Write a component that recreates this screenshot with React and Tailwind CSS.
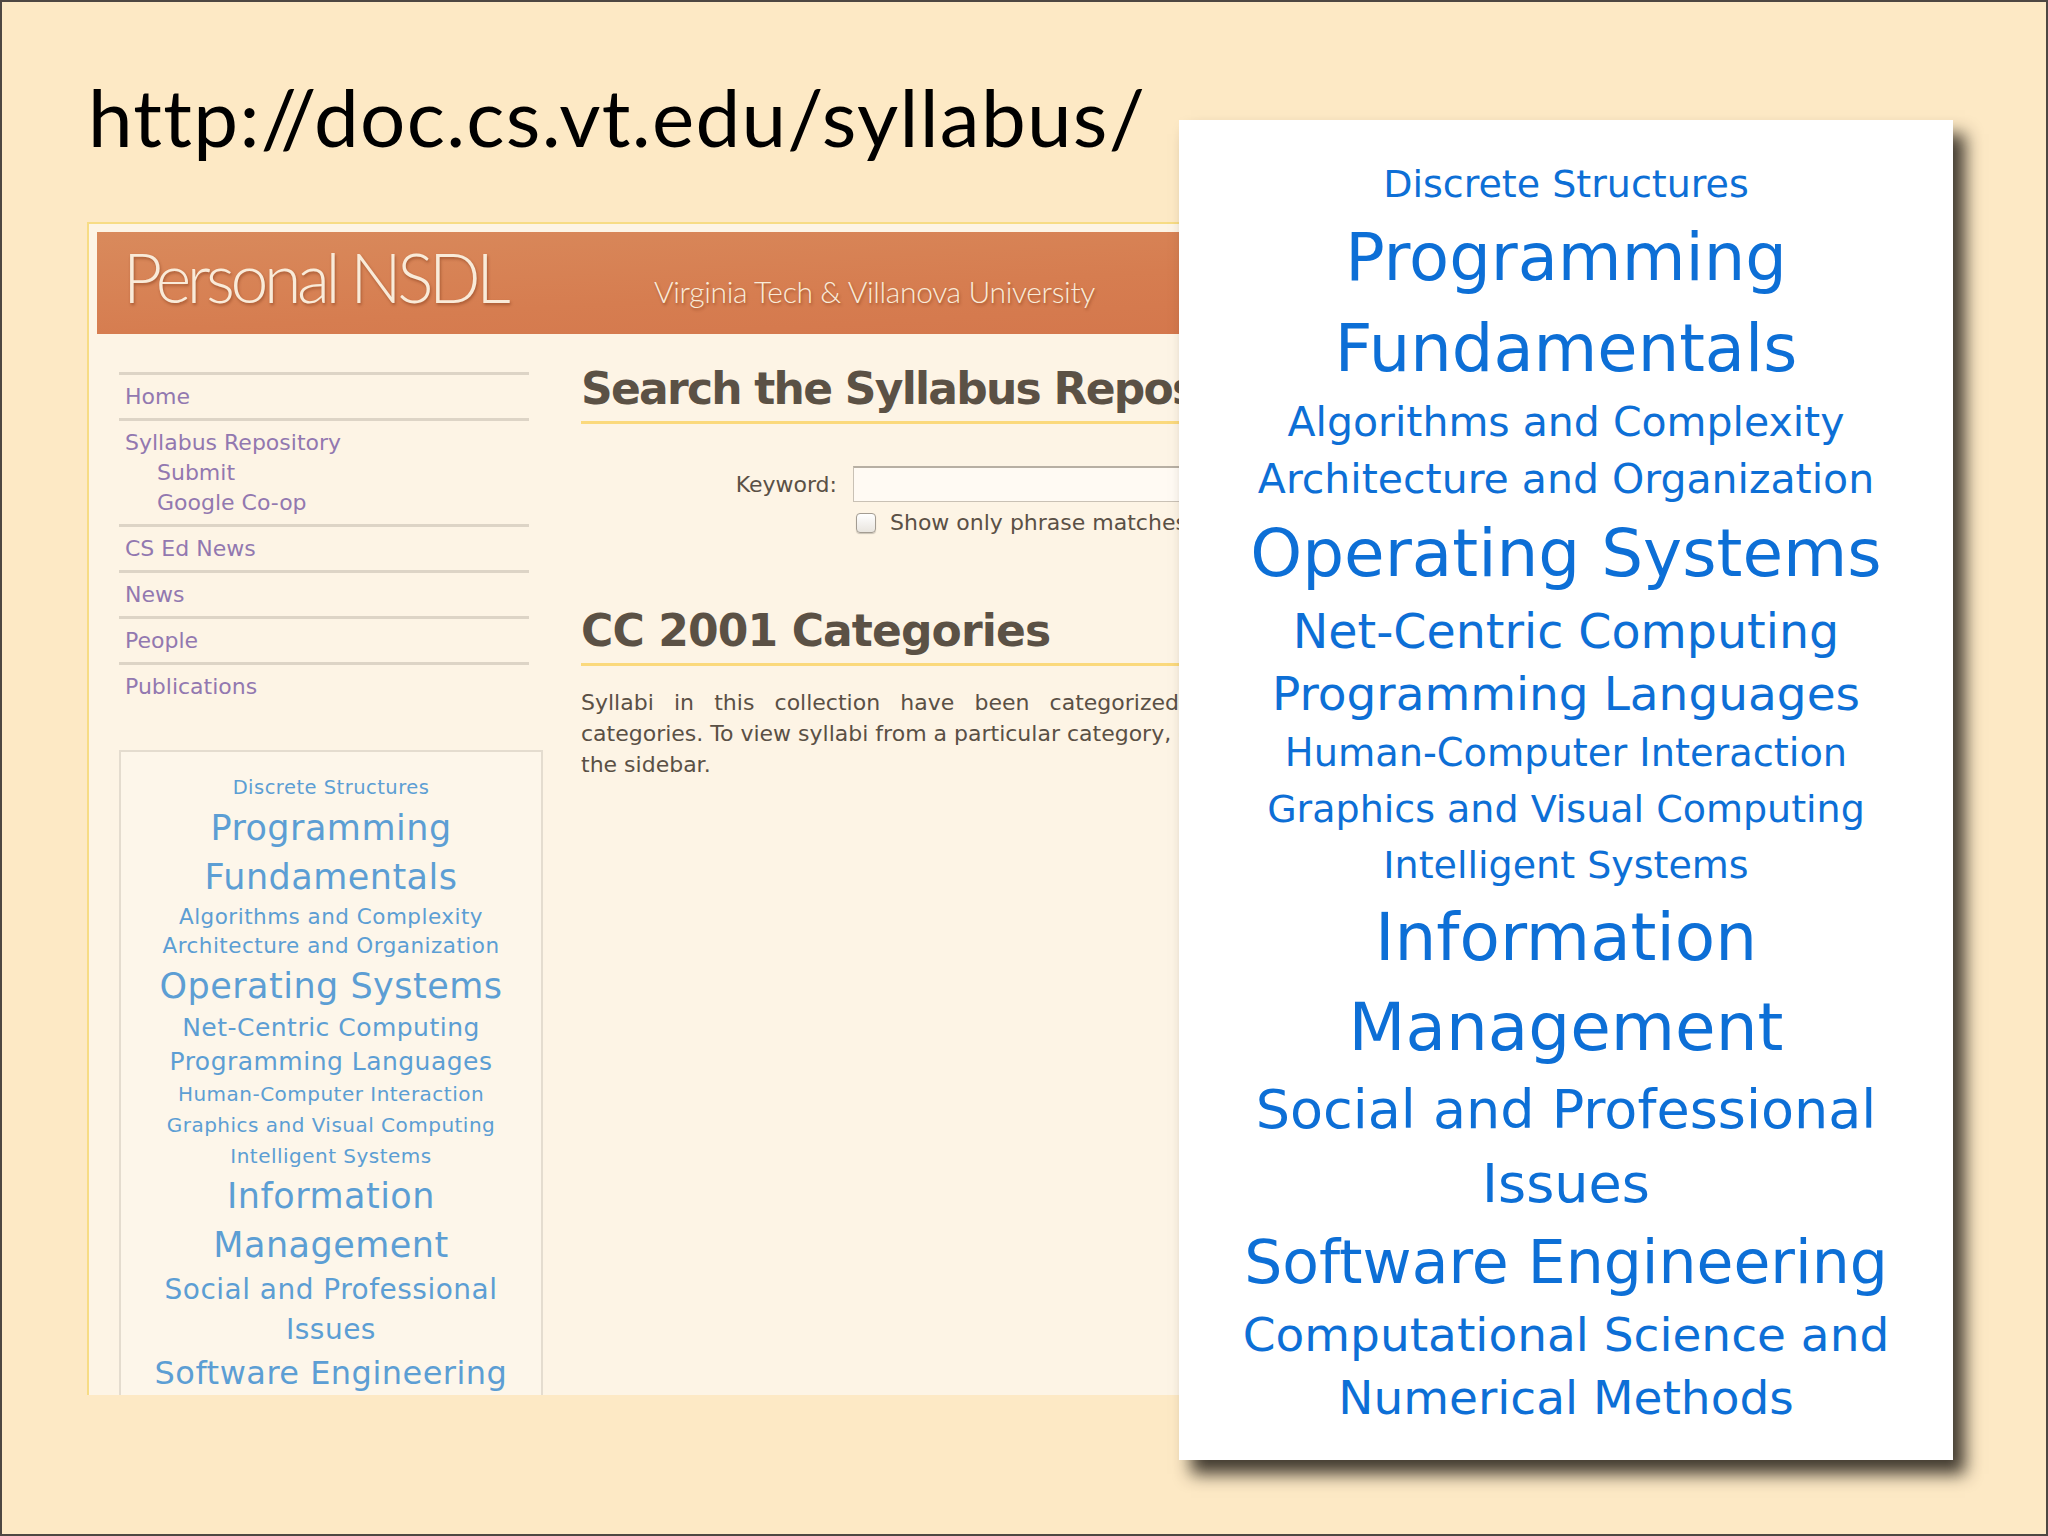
import React from 'react';

const navItems = [
  { label: 'Home' },
  { label: 'Syllabus Repository', children: ['Submit', 'Google Co-op'] },
  { label: 'CS Ed News' },
  { label: 'News' },
  { label: 'People' },
  { label: 'Publications' },
];

// tag cloud: same entries, sized for the small sidebar and for the enlarged panel
const categories = [
  { label: 'Discrete Structures', small: 'text-[19.5px] leading-[32px]', big: 'text-[38px] leading-[56px]' },
  { label: 'Programming Fundamentals', small: 'text-[35px] leading-[49px]', big: 'text-[65.5px] leading-[91px]' },
  { label: 'Algorithms and Complexity', small: 'text-[21.5px] leading-[29px]', big: 'text-[41px] leading-[56px]' },
  { label: 'Architecture and Organization', small: 'text-[21.5px] leading-[30px]', big: 'text-[41px] leading-[58px]' },
  { label: 'Operating Systems', small: 'text-[35px] leading-[50px]', big: 'text-[66px] leading-[92px]' },
  { label: 'Net-Centric Computing', small: 'text-[25px] leading-[34px]', big: 'text-[47.5px] leading-[63px]' },
  { label: 'Programming Languages', small: 'text-[25px] leading-[34px]', big: 'text-[47px] leading-[62px]' },
  { label: 'Human-Computer Interaction', small: 'text-[20px] leading-[31px]', big: 'text-[38.3px] leading-[56px]' },
  { label: 'Graphics and Visual Computing', small: 'text-[20px] leading-[31px]', big: 'text-[38px] leading-[56px]' },
  { label: 'Intelligent Systems', small: 'text-[20px] leading-[31px]', big: 'text-[38px] leading-[56px]' },
  { label: 'Information Management', small: 'text-[35px] leading-[49px]', big: 'text-[66px] leading-[90px]' },
  { label: 'Social and Professional Issues', small: 'text-[28px] leading-[40px]', big: 'text-[54px] leading-[74px]' },
  { label: 'Software Engineering', small: 'text-[32px] leading-[46px]', big: 'text-[60px] leading-[82px]' },
  { label: 'Computational Science and Numerical Methods', small: 'text-[24px] leading-[34px]', big: 'text-[47px] leading-[63px]' },
];

function Header() {
  return (
    <div className="h-[102px] bg-gradient-to-br from-[#d98a5c] via-[#d67d50] to-[#d3744a] flex items-baseline pt-[11px] pl-[26px] text-[#f9ebd9] font-['Lato',sans-serif] font-light [text-shadow:1px_2px_3px_rgba(110,45,15,0.45)]">
      <span className="w-[531px] shrink-0 text-[68px] leading-none tracking-[-0.065em]">Personal NSDL</span>
      <span className="text-[30px] leading-none tracking-[-0.012em]">Virginia Tech &amp; Villanova University</span>
    </div>
  );
}

function Nav() {
  return (
    <div className="w-[410px] shrink-0 mt-[38px] ml-[22px]">
      {navItems.map((item) => (
        <div key={item.label} className="pl-[6px] pt-[7px] pb-[6px] text-[22px] leading-[30px] text-[#9278b0] border-t-[3px] border-[#ddd4c6]">
          <div>{item.label}</div>
          {item.children?.map((c) => (
            <div key={c} className="ml-[32px]">{c}</div>
          ))}
        </div>
      ))}
      <div className="mt-[42px] w-[424px] border-2 border-[#e4dccf] bg-[#fdf6ea] pt-[20px] px-[10px] text-center text-[#5c9ed4] tracking-[0.03em]">
        {categories.map((c) => (
          <div key={c.label} className={c.small}>{c.label}</div>
        ))}
      </div>
    </div>
  );
}

function Main() {
  return (
    <div className="ml-[52px] mt-[31px] w-[598px] shrink-0 overflow-hidden text-[#5a5045]">
      <div className="w-[1000px]">
        <h2 className="text-[44px] leading-[48px] font-bold tracking-[-0.04em] pb-[8px] border-b-[3px] border-[#fbd97c] whitespace-nowrap text-[#5b5145]">
          Search the Syllabus Repository
        </h2>
        <div className="mt-[42px] flex items-center text-[22px]">
          <label className="w-[256px] text-right">Keyword:</label>
          <div className="ml-[16px] w-[420px] h-[36px] border border-[#c9c1b5] border-t-2 border-t-[#b7afa3] bg-[#fffaf3]" />
        </div>
        <div className="mt-[4px] ml-[275px] flex items-center text-[22px]">
          <span className="w-[20px] h-[20px] rounded-[4px] border border-[#a39c92] bg-gradient-to-b from-white to-[#e9e5df] shadow-[0_1px_1px_rgba(0,0,0,0.2)]" />
          <span className="ml-[14px] whitespace-nowrap">Show only phrase matches</span>
        </div>
        <h2 className="mt-[68px] text-[44px] leading-[48px] font-bold tracking-[-0.02em] pb-[8px] border-b-[3px] border-[#fbd97c] text-[#5b5145]">
          CC 2001 Categories
        </h2>
        <p className="mt-[21px] text-[22px] leading-[31px]">
          <span className="block w-[598px] text-justify [text-align-last:justify]">Syllabi in this collection have been categorized</span>
          <span className="block whitespace-nowrap">categories. To view syllabi from a particular category, click on its name in</span>
          <span className="block">the sidebar.</span>
        </p>
      </div>
    </div>
  );
}

export default function App() {
  return (
    <div className="w-[2048px] h-[1536px] relative overflow-hidden bg-[#fde9c5] border-2 border-[#4e4742] font-['DejaVu_Sans',sans-serif]">
      <div className="h-[220px] pt-[74px] pl-[86px]">
        <div className="font-['Lato',sans-serif] text-[80px] leading-none tracking-[0.016em] text-black">http://doc.cs.vt.edu/syllabus/</div>
      </div>

      <div className="ml-[85px] w-[1750px] h-[1173px] border-t-2 border-x-2 border-[#f7dc85] bg-[#fdf4e5] pt-[8px] pl-[8px] overflow-hidden">
        <Header />
        <div className="flex">
          <Nav />
          <Main />
        </div>
      </div>

      {/* enlarged tag cloud laid over the screenshot */}
      <div className="absolute left-[1177px] top-[118px] w-[774px] h-[1340px] bg-white shadow-[12px_14px_16px_rgba(45,40,32,0.9)] pt-[36px] px-[37px] text-center text-[#0d6fd6]">
        {categories.map((c) => (
          <div key={c.label} className={c.big}>{c.label}</div>
        ))}
      </div>
    </div>
  );
}
